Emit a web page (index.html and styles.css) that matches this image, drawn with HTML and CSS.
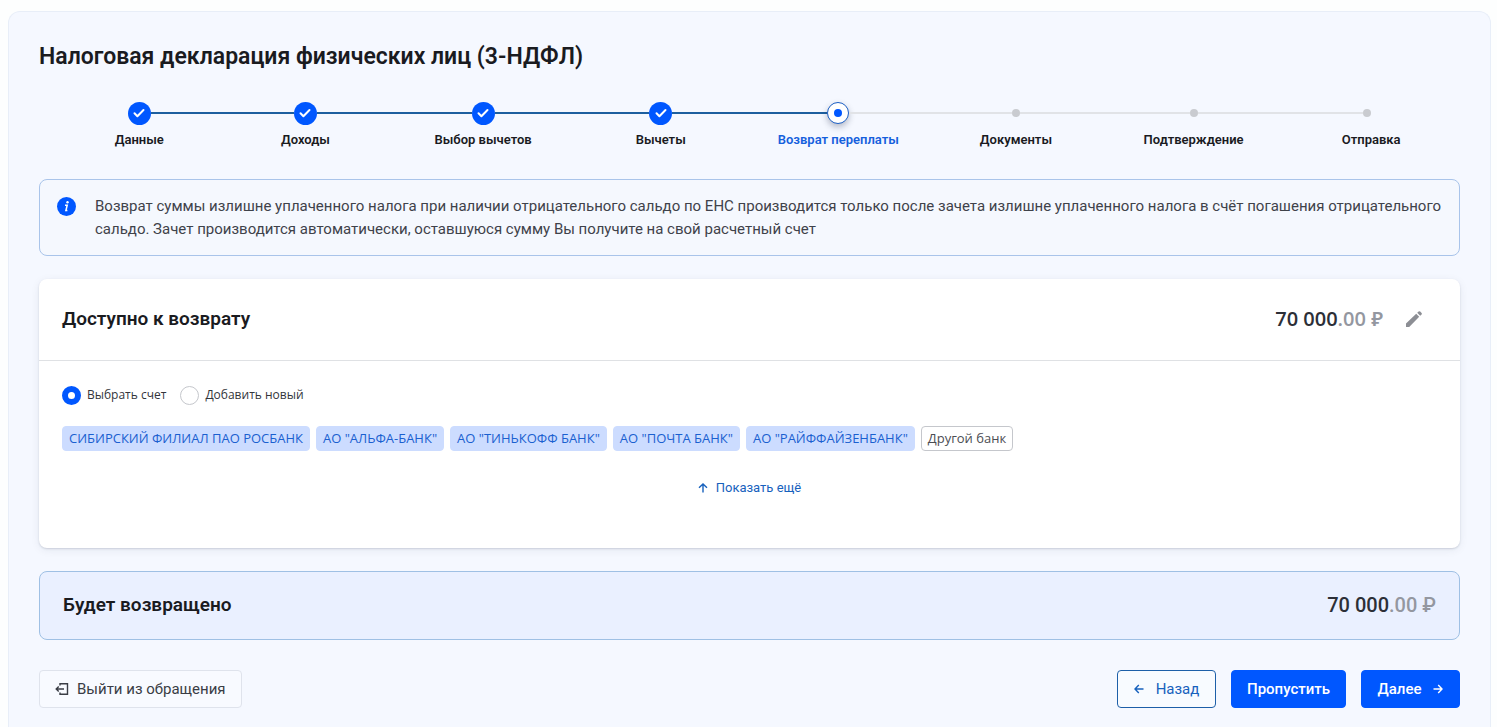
FILE: index.html
```html
<!DOCTYPE html>
<html lang="ru">
<head>
<meta charset="utf-8">
<meta name="viewport" content="width=device-width, initial-scale=1">
<title>Налоговая декларация физических лиц (3-НДФЛ)</title>
<link rel="stylesheet" href="styles.css">
</head>
<body>
<main class="panel">
  <h1 class="title">Налоговая декларация физических лиц (3-НДФЛ)</h1>

  <ol class="steps">
    <li class="step step-done"><span class="track"><span class="marker"><svg class="check" viewBox="0 0 12 12"><path d="M1.500 6.300 4.400 9.200 10.500 3"/></svg></span></span><span class="label">Данные</span></li>
    <li class="step step-done"><span class="track"><span class="marker"><svg class="check" viewBox="0 0 12 12"><path d="M1.500 6.300 4.400 9.200 10.500 3"/></svg></span></span><span class="label">Доходы</span></li>
    <li class="step step-done"><span class="track"><span class="marker"><svg class="check" viewBox="0 0 12 12"><path d="M1.500 6.300 4.400 9.200 10.500 3"/></svg></span></span><span class="label">Выбор вычетов</span></li>
    <li class="step step-done"><span class="track"><span class="marker"><svg class="check" viewBox="0 0 12 12"><path d="M1.500 6.300 4.400 9.200 10.500 3"/></svg></span></span><span class="label">Вычеты</span></li>
    <li class="step step-current" aria-current="step"><span class="track"><span class="marker"></span></span><span class="label">Возврат переплаты</span></li>
    <li class="step"><span class="track"><span class="marker"></span></span><span class="label">Документы</span></li>
    <li class="step"><span class="track"><span class="marker"></span></span><span class="label">Подтверждение</span></li>
    <li class="step"><span class="track"><span class="marker"></span></span><span class="label">Отправка</span></li>
  </ol>

  <section class="notice">
    <svg class="notice-icon" viewBox="0 0 19 19" aria-hidden="true"><circle cx="9.500" cy="9.500" r="9.500" fill="#0057ff"/><circle cx="10.500" cy="5.200" r="1.200" fill="#fff"/><path d="M8 8.300h2.200L8.900 13.600h1.500" fill="none" stroke="#fff" stroke-width="1.500"/></svg>
    <p class="notice-text">Возврат суммы излишне уплаченного налога при наличии отрицательного сальдо по ЕНС производится только после зачета излишне уплаченного налога в счёт погашения отрицательного сальдо. Зачет производится автоматически, оставшуюся сумму Вы получите на свой расчетный счет</p>
  </section>

  <section class="card">
    <header class="card-head">
      <h2 class="heading">Доступно к возврату</h2>
      <div class="sum">
        <span class="amount amount-card">70 000<span class="cents">.00 ₽</span></span>
        <button class="edit" type="button" aria-label="Изменить"><svg viewBox="0 0 18 18"><path d="M1 17v-3.600L11.200 3.700l3 3L4.200 17zM12.200 2.800 13.600 1.500q.8-.7 1.600 0l1.400 1.400q.7.8 0 1.600L15.200 5.800z"/></svg></button>
      </div>
    </header>
    <div class="card-body">
      <div class="choices">
        <label class="choice"><input class="radio" type="radio" name="account" checked>Выбрать счет</label>
        <label class="choice"><input class="radio" type="radio" name="account">Добавить новый</label>
      </div>
      <div class="banks">
        <button class="bank" type="button">СИБИРСКИЙ ФИЛИАЛ ПАО РОСБАНК</button>
        <button class="bank" type="button">АО "АЛЬФА-БАНК"</button>
        <button class="bank" type="button">АО "ТИНЬКОФФ БАНК"</button>
        <button class="bank" type="button">АО "ПОЧТА БАНК"</button>
        <button class="bank" type="button">АО "РАЙФФАЙЗЕНБАНК"</button>
        <button class="bank bank-other" type="button">Другой банк</button>
      </div>
      <button class="more" type="button"><svg class="arrow" viewBox="0 0 10 10"><path d="M5 9.500V1M1 4.800 5 1l4 3.800"/></svg>Показать ещё</button>
    </div>
  </section>

  <section class="total">
    <h2 class="heading">Будет возвращено</h2>
    <span class="amount">70 000<span class="cents">.00 ₽</span></span>
  </section>

  <footer class="actions">
    <button class="btn btn-exit" type="button"><svg class="exit-icon" viewBox="0 0 14 12"><path d="M5 2.500V.7h7.500v10.600H5V9.500M9 6H1M3.700 3.500 1.200 6l2.500 2.500"/></svg>Выйти из обращения</button>
    <button class="btn btn-back" type="button"><svg class="arrow" viewBox="0 0 10 10"><path d="M9.500 5H1M4.800 1 1 5l3.800 4"/></svg>Назад</button>
    <button class="btn btn-main" type="button">Пропустить</button>
    <button class="btn btn-main" type="button">Далее<svg class="arrow" viewBox="0 0 10 10"><path d="M.5 5H9M5.200 1 9 5 5.200 9"/></svg></button>
  </footer>
</main>
</body>
</html>
```
FILE: styles.css
```css
* { box-sizing: border-box; }

body {
  margin: 0;
  min-height: 100vh;
  display: flex;
  flex-direction: column;
  background: #fdfefe;
  color: #1a1b1f;
  font-family: Roboto, "Liberation Sans", sans-serif;
}

h1, h2, p, ol { margin: 0; padding: 0; }
button { font: inherit; cursor: pointer; }
svg { flex: none; }

.panel {
  flex: 1;
  margin: 11px 6px 0 8px;
  padding: 29px 30px 19px;
  background: #f5f8ff;
  border: 1px solid #e8eef8;
  border-bottom: 0;
  border-radius: 12px 12px 0 0;
}

.title { font-size: 23px; line-height: 32px; font-weight: 600; }

.steps {
  display: grid;
  grid-template-columns: repeat(8, 1fr);
  margin-top: 26px;
  list-style: none;
}
.step { display: flex; flex-direction: column; }
.step:first-child { padding-left: 23px; }
.track { display: flex; align-items: center; height: 28px; }
.track::before, .track::after { content: ""; flex: 1; height: 2px; background: #e1e3e7; }
.step-done .track::before, .step-done .track::after, .step-current .track::before { background: #1d5f9f; }
.step:first-child .track::before, .step:last-child .track::after { background: transparent; }
.step:last-child .track { padding-right: 8px; }
.marker {
  display: flex;
  align-items: center;
  justify-content: center;
  width: 8px;
  height: 8px;
  border-radius: 50%;
  background: #c9cbd0;
}
.step-done .marker { width: 23px; height: 23px; background: #0057ff; }
.step-current .marker {
  width: 22px;
  height: 22px;
  background: #fff;
  border: 1px solid #1c5fc4;
  box-shadow: 0 3px 6px rgba(30, 40, 70, .3);
}
.step-current .marker::after { content: ""; width: 8px; height: 8px; border-radius: 50%; background: #0057ff; }
.check { width: 12px; height: 12px; fill: none; stroke: #fff; stroke-width: 2; stroke-linecap: round; stroke-linejoin: round; }
.label { margin-top: 4px; font-size: 13px; line-height: 18px; font-weight: 600; text-align: center; }
.step-current .label { color: #1560dd; }

.notice {
  display: flex;
  gap: 19px;
  margin-top: 30px;
  padding: 15px 17px 14px;
  border: 1px solid #a9c4ea;
  border-radius: 8px;
  background: #f5f8fe;
}
.notice-icon { width: 19px; height: 19px; margin-top: 2px; }
.notice-text { color: #3f424a; font-size: 15px; line-height: 23px; }

.card {
  margin-top: 23px;
  border-radius: 8px;
  background: #fff;
  box-shadow: 0 1px 2px rgba(30, 40, 70, .16), 0 2px 10px rgba(30, 40, 70, .07);
}
.card-head {
  display: flex;
  align-items: center;
  justify-content: space-between;
  padding: 24px 37px 25px 23px;
  border-bottom: 1px solid #dfe1e4;
}
.heading { font-size: 19px; line-height: 32px; font-weight: 600; }
.sum { display: flex; align-items: center; gap: 22px; }
.amount { color: #2c2f37; font-size: 20px; line-height: 28px; font-weight: 500; }
.amount-card { font-family: "Open Sans", "Noto Sans", sans-serif; font-weight: 600; }
.cents { color: #9497a0; }
.edit { display: flex; padding: 0; border: 0; background: none; }
.edit svg { width: 18px; height: 18px; fill: #8c8e94; }

.card-body { padding: 24px 23px 49px; font-family: "Open Sans", "Noto Sans", sans-serif; line-height: 20px; }
.choices { display: flex; gap: 14px; }
.choice { display: flex; align-items: center; gap: 6px; color: #33353b; font-size: 12px; }
.radio {
  appearance: none;
  width: 19px;
  height: 19px;
  margin: 0;
  border: 1px solid #c5c7cc;
  border-radius: 50%;
  background: #fff;
}
.radio:checked { border: 6px solid #0057ff; }
.banks { display: flex; flex-wrap: wrap; gap: 6px; margin-top: 21px; }
.bank {
  height: 25px;
  padding: 0 6px;
  border: 1px solid #ccdcff;
  border-radius: 4px;
  background: #ccdcff;
  color: #1a60d0;
  font-size: 13px;
  line-height: 23px;
}
.bank-other { border-color: #c5c7cc; background: #fff; color: #4b4d53; }
.more {
  display: flex;
  align-items: center;
  gap: 8px;
  margin: 26px auto 0;
  padding: 0;
  border: 0;
  background: none;
  color: #1761bd;
  font-family: Roboto, sans-serif;
  font-size: 13px;
  line-height: 22px;
}
.arrow { width: 10px; height: 10px; fill: none; stroke: currentColor; stroke-width: 1.4; }

.total {
  display: flex;
  align-items: center;
  justify-content: space-between;
  margin-top: 23px;
  padding: 17px 23px 18px;
  border: 1px solid #9fc0e4;
  border-radius: 8px;
  background: #eaf0ff;
}

.actions { display: flex; gap: 15px; margin-top: 30px; }
.btn {
  display: flex;
  align-items: center;
  justify-content: center;
  gap: 12px;
  min-width: 99px;
  height: 38px;
  padding: 0 15px;
  border: 1px solid #0057ff;
  border-radius: 4px;
  font-size: 15px;
  line-height: 22px;
}
.btn-exit { gap: 8px; margin-right: auto; border-color: #dfe3ec; background: #f8faff; color: #3a3d45; }
.exit-icon { width: 14px; height: 12px; fill: none; stroke: currentColor; stroke-width: 1.4; }
.btn-back { border-color: #1d5fa8; background: #f8fbff; color: #1761bd; }
.btn-main { background: #0057ff; color: #fff; font-weight: 500; }
```
